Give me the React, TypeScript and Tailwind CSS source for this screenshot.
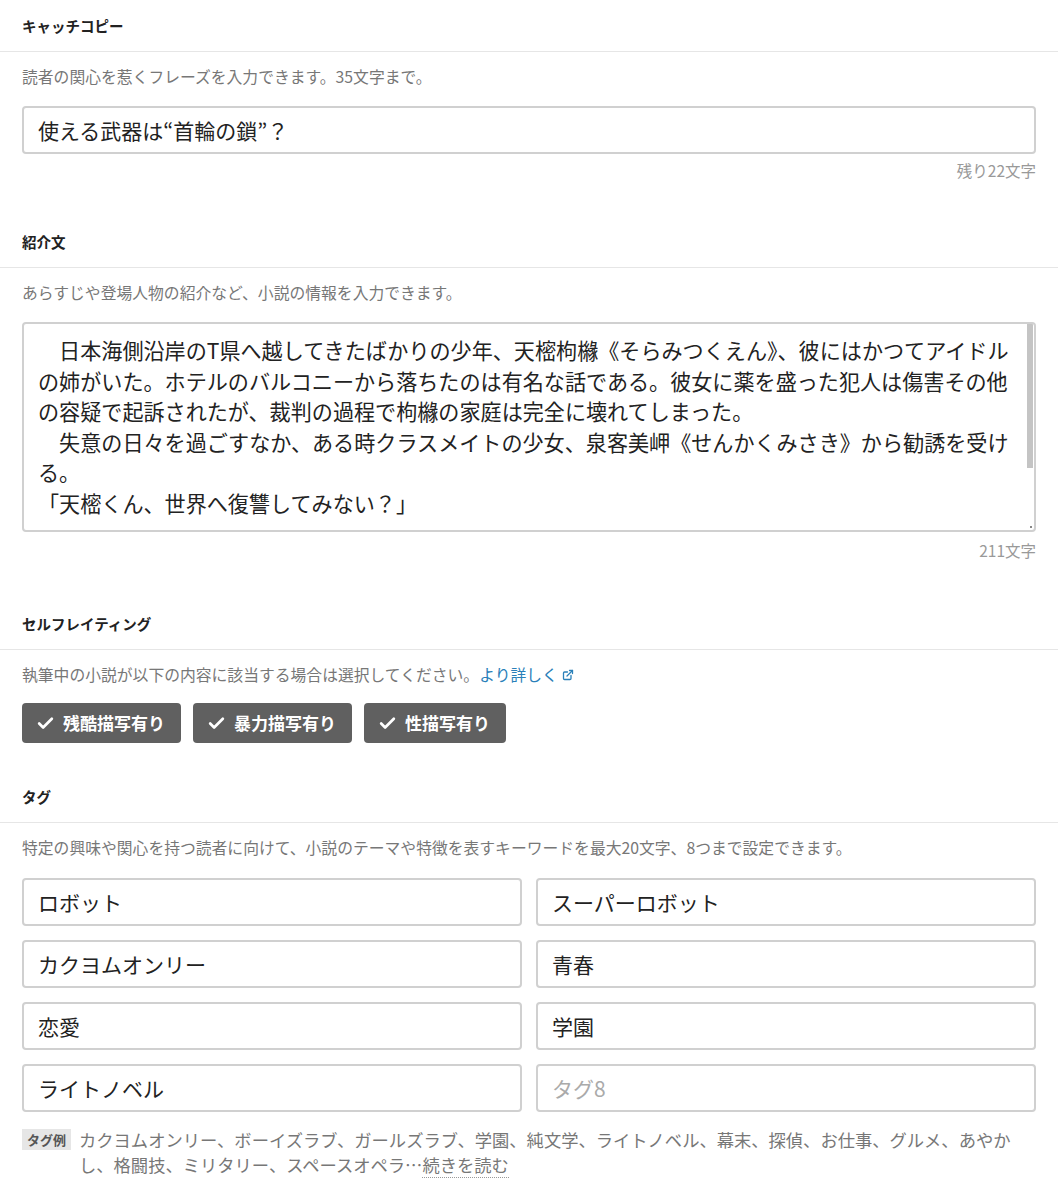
import { Check, ExternalLink } from "lucide-react";

const font = {
  fontFamily: '"Noto Sans CJK JP", "Noto Sans", sans-serif',
};

function SectionTitle({ children }: { children: React.ReactNode }) {
  return (
    <div className="pt-[16px] pb-[15px] px-[22px] border-b border-[#e6e6e6] text-[14.5px] font-bold leading-[20px] text-[#222]">
      {children}
    </div>
  );
}

function Help({ children }: { children: React.ReactNode }) {
  return (
    <p className="mt-[14px] px-[22px] text-[15.8px] leading-[22px] text-[#777]">
      {children}
    </p>
  );
}

function TextBox({ value, placeholder }: { value?: string; placeholder?: string }) {
  return (
    <div className="h-[48px] border-2 border-[#d0d0d0] rounded-[4px] px-[14px] flex items-center text-[21px] leading-[28px] bg-white">
      {value ? (
        <span className="text-[#222]">{value}</span>
      ) : (
        <span className="text-[#aaa]">{placeholder}</span>
      )}
    </div>
  );
}

const introLines = [
  "　日本海側沿岸のT県へ越してきたばかりの少年、天樒枸櫞《そらみつくえん》、彼にはかつてアイドル",
  "の姉がいた。ホテルのバルコニーから落ちたのは有名な話である。彼女に薬を盛った犯人は傷害その他",
  "の容疑で起訴されたが、裁判の過程で枸櫞の家庭は完全に壊れてしまった。",
  "　失意の日々を過ごすなか、ある時クラスメイトの少女、泉客美岬《せんかくみさき》から勧誘を受け",
  "る。",
  "「天樒くん、世界へ復讐してみない？」",
];

const ratings = ["残酷描写有り", "暴力描写有り", "性描写有り"];

const tags = [
  "ロボット",
  "スーパーロボット",
  "カクヨムオンリー",
  "青春",
  "恋愛",
  "学園",
  "ライトノベル",
  "",
];

export default function App() {
  return (
    <div className="min-h-[1200px] bg-white pb-8" style={font}>
      {/* キャッチコピー */}
      <section>
        <SectionTitle>キャッチコピー</SectionTitle>
        <Help>読者の関心を惹くフレーズを入力できます。35文字まで。</Help>
        <div className="mt-[18px] px-[22px]">
          <TextBox value="使える武器は“首輪の鎖”？" />
          <div className="mt-[5px] text-right text-[15.5px] leading-[22px] text-[#999]">
            残り22文字
          </div>
        </div>
      </section>

      {/* 紹介文 */}
      <section className="mt-[35px]">
        <SectionTitle>紹介文</SectionTitle>
        <Help>あらすじや登場人物の紹介など、小説の情報を入力できます。</Help>
        <div className="mt-[18px] px-[22px]">
          <div className="relative h-[210px] border-2 border-[#d0d0d0] rounded-[4px] bg-white overflow-hidden">
            <div className="pl-[14px] pt-[11px] text-[21.1px] leading-[30.5px] text-[#222]">
              {introLines.map((line, i) => (
                <div key={i} className="whitespace-nowrap">
                  {line}
                </div>
              ))}
            </div>
            <div className="absolute right-[1px] top-0 h-[144px] w-[6px] bg-[#c4c4c4]" />
            <div className="absolute right-[2px] bottom-[2px] w-[2px] h-[2px] bg-[#888]" />
          </div>
          <div className="mt-[7px] text-right text-[15.5px] leading-[22px] text-[#999]">
            211文字
          </div>
        </div>
      </section>

      {/* セルフレイティング */}
      <section className="mt-[37px]">
        <SectionTitle>セルフレイティング</SectionTitle>
        <Help>
          執筆中の小説が以下の内容に該当する場合は選択してください。
          <a href="#" className="text-[#2a80b9] inline-flex items-center gap-[4px]">
            より詳しく
            <ExternalLink size={12} strokeWidth={2.6} />
          </a>
        </Help>
        <div className="mt-[17px] px-[22px] flex gap-[12px]">
          {ratings.map((r) => (
            <button
              key={r}
              className="h-[40px] pl-[14px] pr-[16px] rounded-[4px] bg-[#606060] text-white font-bold text-[17px] flex items-center gap-[8px]"
            >
              <Check size={19} strokeWidth={3.4} />
              {r}
            </button>
          ))}
        </div>
      </section>

      {/* タグ */}
      <section className="mt-[28px]">
        <SectionTitle>タグ</SectionTitle>
        <Help>
          特定の興味や関心を持つ読者に向けて、小説のテーマや特徴を表すキーワードを最大20文字、8つまで設定できます。
        </Help>
        <div className="mt-[19px] px-[22px] grid grid-cols-2 gap-x-[14px] gap-y-[14px]">
          {tags.map((t, i) => (
            <TextBox key={i} value={t} placeholder="タグ8" />
          ))}
        </div>
        <div className="mt-[15px] px-[22px] flex gap-[8px]">
          <span className="mt-[2px] h-[21px] px-[5px] bg-[#e6e6e6] text-[#555] font-bold text-[13px] leading-[21px] shrink-0">
            タグ例
          </span>
          <p className="text-[17.3px] leading-[25px] text-[#777] whitespace-nowrap">
            カクヨムオンリー、ボーイズラブ、ガールズラブ、学園、純文学、ライトノベル、幕末、探偵、お仕事、グルメ、あやか
            <br />
            し、格闘技、ミリタリー、スペースオペラ…
            <a href="#" className="border-b border-dotted border-[#999]">
              続きを読む
            </a>
          </p>
        </div>
      </section>
    </div>
  );
}
